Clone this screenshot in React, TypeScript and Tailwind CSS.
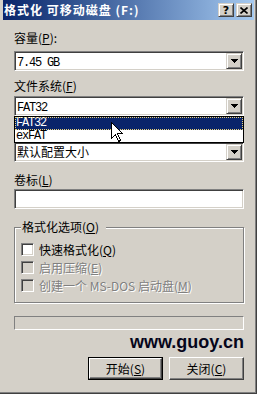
import React from 'react';

// classic win2k 3D edges
const sunken =
  'border border-t-[#808080] border-l-[#808080] border-b-white border-r-white shadow-[inset_1px_1px_0_#404040,inset_-1px_-1px_0_#d4d0c8]';
const raised =
  'border border-t-[#d4d0c8] border-l-[#d4d0c8] border-b-[#404040] border-r-[#404040] shadow-[inset_1px_1px_0_#fff,inset_-1px_-1px_0_#808080]';
const latin = "font-['Liberation_Mono',monospace] tracking-[-1.2px]";

const Arrow = () => (
  <svg width="7" height="4" viewBox="0 0 7 4" shapeRendering="crispEdges">
    <rect x="0" y="0" width="7" height="1" fill="#000" />
    <rect x="1" y="1" width="5" height="1" fill="#000" />
    <rect x="2" y="2" width="3" height="1" fill="#000" />
    <rect x="3" y="3" width="1" height="1" fill="#000" />
  </svg>
);

const Combo = ({ children }: { children: React.ReactNode }) => (
  <div className={`h-[20px] flex bg-white p-[1px] ${sunken}`}>
    <div className="flex-1 pl-[1px] leading-[16px] text-black">{children}</div>
    <div className={`w-[16px] h-[16px] bg-[#d4d0c8] flex items-center justify-center ${raised}`}>
      <Arrow />
    </div>
  </div>
);

const Check = ({ disabled = false }: { disabled?: boolean }) => (
  <span className={`block w-[13px] h-[13px] shrink-0 ${sunken} ${disabled ? 'bg-[#d4d0c8]' : 'bg-white'}`} />
);

const Cursor = () => (
  <svg width="12" height="20" viewBox="0 0 12 20" shapeRendering="crispEdges">
    <path d="M0.5 0.5 L0.5 16.5 L4.5 12.5 L7.5 19.5 L9.5 18.5 L6.5 11.5 L11.5 11.5 Z" fill="#fff" stroke="#000" strokeWidth="1" />
  </svg>
);

export default function App() {
  return (
    <div className="w-[257px] h-[394px] overflow-hidden bg-[#d4d0c8] border-r border-b border-[#404040] text-[12px] leading-[12px] text-black font-['Noto_Sans_CJK_SC',sans-serif]">
      <div className="h-full flex flex-col pl-[3px] pr-[1px] border-r border-b border-[#808080]">
        {/* title bar */}
        <div className="h-[20px] shrink-0 flex items-center pl-[1px] pr-[2px] bg-linear-to-r from-[#0a246a] to-[#a6caf0]">
          <span className="flex-1 text-white font-bold tracking-[1px] whitespace-pre">格式化 可移动磁盘 (F:)</span>
          <div className={`w-[16px] h-[14px] bg-[#d4d0c8] flex items-center justify-center ${raised}`}>
            <span className="font-['DejaVu_Sans',sans-serif] font-bold text-[11px] leading-[11px]">?</span>
          </div>
          <div className={`ml-[2px] w-[16px] h-[14px] bg-[#d4d0c8] flex items-center justify-center ${raised}`}>
            <svg width="8" height="7" viewBox="0 0 8 7">
              <path d="M0.5 0.5 L7.5 6.5 M7.5 0.5 L0.5 6.5" stroke="#000" strokeWidth="1.6" />
            </svg>
          </div>
        </div>

        <div className="flex flex-col pl-[11px] pr-[10px]">
          <div className="mt-[12px] h-[12px]">
            容量(<u>P</u>):
          </div>
          <div className="mt-[7px]">
            <Combo>
              <span className={latin}>7.45 GB</span>
            </Combo>
          </div>

          <div className="mt-[9px] h-[12px]">
            文件系统(<u>F</u>)
          </div>
          <div className="mt-[4px] relative">
            <Combo>
              <span className={latin}>FAT32</span>
            </Combo>
            {/* open dropdown list */}
            <div className="absolute left-0 right-0 top-full z-10 border border-black bg-white">
              <div className={`h-[13px] pl-[1px] leading-[13px] bg-[#0a246a] text-white outline-1 outline-dotted outline-[#e9d27a] -outline-offset-1 ${latin}`}>
                FAT32
              </div>
              <div className={`h-[12px] pl-[1px] leading-[12px] ${latin}`}>exFAT</div>
              <div className="absolute left-[96px] top-[5px]">
                <Cursor />
              </div>
            </div>
          </div>

          {/* label hidden under the open list */}
          <div className="mt-[10px] h-[12px]" />
          <div className="mt-[4px]">
            <Combo>默认配置大小</Combo>
          </div>

          <div className="mt-[12px] h-[12px]">
            卷标(<u>L</u>)
          </div>
          <div className={`mt-[3px] h-[20px] bg-white ${sunken}`} />

          <fieldset className="mt-[12px] pl-[6px] pb-[10px] border border-[#808080] shadow-[1px_1px_0_#fff,inset_1px_1px_0_#fff]">
            <legend className="pl-[1px] pr-[7px] h-[12px] bg-[#d4d0c8]">
              格式化选项(<u>O</u>)
            </legend>
            <div className="mt-[10px] flex flex-col gap-[5px]">
              <div className="flex items-center gap-[5px] h-[13px]">
                <Check />
                <span>
                  快速格式化(<u>Q</u>)
                </span>
              </div>
              <div className="flex items-center gap-[5px] h-[13px] text-[#808080] [text-shadow:1px_1px_0_#fff]">
                <Check disabled />
                <span>
                  启用压缩(<u>E</u>)
                </span>
              </div>
              <div className="flex items-center gap-[5px] h-[13px] text-[#808080] [text-shadow:1px_1px_0_#fff]">
                <Check disabled />
                <span className="whitespace-pre">
                  创建一个 MS-DOS 启动盘(<u>M</u>)
                </span>
              </div>
            </div>
          </fieldset>

          {/* progress bar */}
          <div className="mt-[13px] h-[14px] border border-t-[#808080] border-l-[#808080] border-b-white border-r-white" />

          <div className="mt-[3px] h-[18px] text-right font-['Liberation_Sans',sans-serif] font-bold text-[18px] leading-[18px] text-[#05051a]">
            www.guoy.cn
          </div>

          <div className="mt-[6px] flex justify-end gap-[6px]">
            <button className="w-[75px] h-[23px] p-0 border border-black bg-[#d4d0c8]">
              <span className="h-full w-full flex items-center justify-center border border-t-white border-l-white border-b-[#404040] border-r-[#404040] shadow-[inset_-1px_-1px_0_#808080]">
                开始(<u>S</u>)
              </span>
            </button>
            <button className="w-[75px] h-[23px] p-0 bg-[#d4d0c8]">
              <span className="h-full w-full flex items-center justify-center border border-t-white border-l-white border-b-[#404040] border-r-[#404040] shadow-[inset_-1px_-1px_0_#808080]">
                关闭(<u>C</u>)
              </span>
            </button>
          </div>
        </div>
      </div>
    </div>
  );
}
